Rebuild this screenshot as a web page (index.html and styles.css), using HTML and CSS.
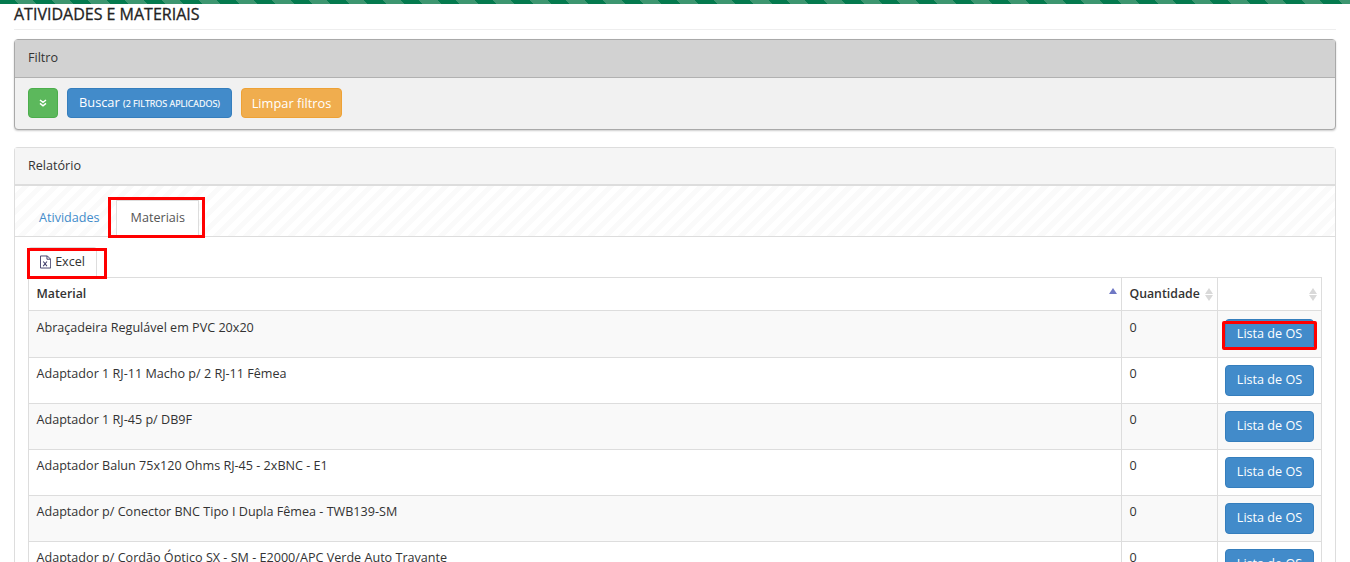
FILE: index.html
```html
<!DOCTYPE html>
<html lang="pt">
<head>
<meta charset="utf-8">
<title>Atividades e Materiais</title>
<link rel="stylesheet" href="styles.css">
</head>
<body>
<div class="topbar"></div>
<main class="page">
  <h1 class="title">ATIVIDADES E MATERIAIS</h1>
  <section class="panel filter">
    <div class="panel-head">Filtro</div>
    <div class="panel-body">
      <button class="btn green" aria-label="Expandir">
        <svg width="8" height="8" viewBox="0 0 8 8"><path d="M1 1l3 2.4L7 1M1 4.400l3 2.400 3-2.400" fill="none" stroke="#fff" stroke-width="1.500"/></svg>
      </button>
      <button class="btn blue search">Buscar <small>(2 FILTROS APLICADOS)</small></button>
      <button class="btn orange">Limpar filtros</button>
    </div>
  </section>
  <section class="panel report">
    <div class="panel-head">Relatório</div>
    <div class="tabs">
      <a class="tab">Atividades</a>
      <a class="tab active">Materiais<span class="mark mark-tab"></span></a>
    </div>
    <div class="content">
      <div class="toolbar">
        <button class="excel">
          <svg width="12" height="14" viewBox="0 0 12 14"><path d="M.5.5h7.500l3.500 3.500v9.500h-11z" fill="#fff" stroke="#3d3a66"/><path d="M7.500.5v3.500h4" fill="none" stroke="#3d3a66"/><path d="M3.500 6.500l4 5M7.500 6.500l-4 5" stroke="#3d3a66" stroke-width="1.100"/></svg>
          Excel
        </button>
        <span class="mark mark-excel"></span>
      </div>
      <table>
        <thead>
          <tr>
            <th class="c1">Material<span class="sort asc"></span></th>
            <th class="c2">Quantidade<span class="sort both"></span></th>
            <th class="c3"><span class="sort both"></span></th>
          </tr>
        </thead>
        <tbody>
          <tr class="first"><td>Abraçadeira Regulável em PVC 20x20</td><td>0</td><td class="act"><button class="btn blue list">Lista de OS<span class="mark mark-btn"></span></button></td></tr>
          <tr><td>Adaptador 1 RJ-11 Macho p/ 2 RJ-11 Fêmea</td><td>0</td><td class="act"><button class="btn blue list">Lista de OS</button></td></tr>
          <tr><td>Adaptador 1 RJ-45 p/ DB9F</td><td>0</td><td class="act"><button class="btn blue list">Lista de OS</button></td></tr>
          <tr><td>Adaptador Balun 75x120 Ohms RJ-45 - 2xBNC - E1</td><td>0</td><td class="act"><button class="btn blue list">Lista de OS</button></td></tr>
          <tr><td>Adaptador p/ Conector BNC Tipo I Dupla Fêmea - TWB139-SM</td><td>0</td><td class="act"><button class="btn blue list">Lista de OS</button></td></tr>
          <tr><td>Adaptador p/ Cordão Óptico SX - SM - E2000/APC Verde Auto Travante</td><td>0</td><td class="act"><button class="btn blue list">Lista de OS</button></td></tr>
        </tbody>
      </table>
    </div>
  </section>
</main>
</body>
</html>
```
FILE: styles.css
```css
* { box-sizing: border-box; }
html, body { margin: 0; height: 562px; overflow: hidden; background: #fff; }
body { font-family: "Open Sans", sans-serif; font-size: 12.600px; color: #333; line-height: 1.42857; }
.topbar {
  height: 4px;
  background: repeating-linear-gradient(45deg, #047a4e 0 13px, #3d9670 13px 26px);
}
.page { padding: 0 14px; width: 1350px; height: 558px; }
.title {
  margin: 0 0 9px;
  height: 26px;
  width: 1322px;
  border-bottom: 1px solid #eee;
  font-size: 16px;
  font-weight: 400;
  line-height: 20px;
  color: #222;
  -webkit-text-stroke: .3px #222;
}
.panel { width: 1322px; border: 1px solid #ddd; border-radius: 4px; background: #fff; }
.panel-head { padding: 0 13px; height: 37px; line-height: 35px; background: #f5f5f5; font-size: 12.600px; }
.filter { height: 91px; border-color: #a9a9a9; background: #f1f1f1; box-shadow: 0 1px 2px rgba(0,0,0,.2); margin-bottom: 17px; }
.filter .panel-head { background: #d2d2d2; border-bottom: 1px solid #b1b1b1; height: 38px; line-height: 36px; }
.panel-body { display: flex; gap: 9px; padding: 10px 13px; }
.btn {
  border: 1px solid transparent;
  border-radius: 4px;
  height: 30px;
  padding: 0 11px;
  font: 12.800px/26px "Open Sans", sans-serif;
  color: #fff;
  white-space: nowrap;
}
.btn small { font-size: 8.950px; -webkit-text-stroke: .15px #fff; }
.green { width: 30px; background: #5cb85c; border-color: #4cae4c; padding: 0; display: flex; align-items: center; justify-content: center; }
.blue { background: #428bca; border-color: #357ebd; }
.search { width: 165px; }
.orange { width: 101px; background: #f0ad4e; border-color: #eea236; padding: 0; }
.report { height: 421px; border-bottom: 0; border-radius: 4px 4px 0 0; }
.report .panel-head { border-bottom: 2px solid #ddd; height: 38px; line-height: 36px; }
.tabs {
  display: flex;
  height: 51px;
  padding: 14px 10px 0;
  border-bottom: 1px solid #ddd;
  background: repeating-linear-gradient(135deg, #fff 0 5.300px, #fafafa 5.300px 10.600px);
}
.tab { position: relative; height: 37px; padding: 0 14px; line-height: 36px; color: #428bca; font-size: 12.600px; }
.tab.active { padding: 0 14px; margin-left: 2px; width: 83px; background: #fff; border: 1px solid #ddd; border-bottom-color: #fff; color: #555; margin-bottom: -1px; height: 37px; line-height: 33px; }
.content { padding: 10px 13px 0; }
.toolbar { position: relative; height: 31px; }
.excel {
  display: flex;
  align-items: center;
  gap: 4px;
  width: 69px;
  height: 31px;
  padding: 0 11px 2px;
  background: #fff;
  border: 1px solid #ddd;
  border-radius: 3px 3px 0 0;
  font: 12.600px "Open Sans", sans-serif;
  color: #333;
}
table { width: 1294px; border-collapse: collapse; table-layout: fixed; margin-top: -1px; }
th, td { border: 1px solid #ddd; padding: 7px 7.500px; text-align: left; vertical-align: top; font-size: 12.600px; line-height: 17px; }
th { position: relative; height: 33px; padding-top: 7px; font-size: 12.300px; font-weight: 600; color: #333; }
.c2 { width: 96px; }
.c3 { width: 104px; }
tbody tr { height: 46px; }
tbody tr.first { height: 47px; }
tr.first td { padding-top: 8px; }
tbody tr:nth-child(odd) { background: #f9f9f9; }
td.act { padding: 7px 7px 0; }
tr.first td.act { padding-top: 8px; }
.list { position: relative; width: 89px; height: 31px; padding: 0 0 2px; display: block; font-size: 12.600px; line-height: 26px; }
.sort { position: absolute; right: 3px; top: 10px; width: 9px; height: 13px; }
.sort::before, .sort::after { content: ""; position: absolute; left: 0; border-left: 4.500px solid transparent; border-right: 4.500px solid transparent; }
.sort.asc::before { top: 0; border-bottom: 6px solid #6f78c4; }
.sort.both::before { top: 0; border-bottom: 6px solid #d9d9d9; }
.sort.both::after { top: 7px; border-top: 6px solid #d9d9d9; }
.mark { position: absolute; border: 3px solid #f00; pointer-events: none; }
.mark-tab { left: -9px; top: -4px; width: 97px; height: 41px; }
.mark-excel { left: -1px; top: 1px; width: 80px; height: 31px; }
.mark-btn { left: -4px; top: 1px; width: 95px; height: 29px; border-radius: 2px; }
```
